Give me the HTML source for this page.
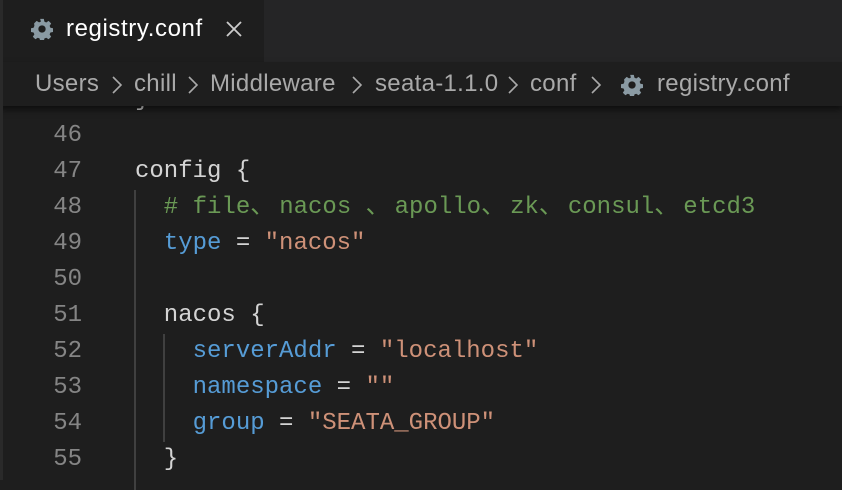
<!DOCTYPE html>
<html><head><meta charset="utf-8"><style>
*{margin:0;padding:0;box-sizing:border-box}
body{width:842px;height:480px;background:#1e1e1e;overflow:hidden;position:relative;font-family:"Liberation Sans",sans-serif}
.lb{position:absolute;left:0;top:0;width:3px;height:480px;background:#2a2a2a;z-index:5}
.tabs{position:absolute;left:0;top:0;width:842px;height:62px;background:#252526}
.tab{position:absolute;left:3px;top:0;width:261px;height:62px;background:#1e1e1e;color:#fff;font-size:24px;letter-spacing:.6px}
.tab .t{position:absolute;left:63px;top:15px}
.bc{position:absolute;left:0;top:62px;width:842px;height:44px;background:#1e1e1e;color:#a9a9a9;font-size:24px;letter-spacing:.3px;z-index:3;box-shadow:0 4px 6px rgba(0,0,0,.5)}
.bc span{position:absolute;top:8px;white-space:pre}
.bc svg.ch{position:absolute;top:13px}
.code{position:absolute;left:0;top:82px;font-family:"Liberation Mono",monospace;font-size:24px;line-height:36px}
.ln{position:absolute;left:0;width:82px;text-align:right;color:#858585}
.c{position:absolute;left:135px;white-space:pre;color:#d4d4d4;height:36px}
.cm{color:#6a9955}.k{color:#569cd6}.s{color:#ce9178}
.j{display:inline-block;width:29px;line-height:24px;vertical-align:baseline;font-family:"Noto Sans CJK SC",sans-serif}
.g{position:absolute;width:2px;background:#404040}
</style></head><body>
<div class="lb"></div>
<div class="tabs"><div class="tab">
<svg style="position:absolute;left:28px;top:18px" width="22" height="22" viewBox="0 0 24 24"><path fill="#8a9aa3" d="M10 1h4l.6 3 2 .9 2.6-1.7 2.8 2.8-1.7 2.6.9 2 3 .6v4l-3 .6-.9 2 1.7 2.6-2.8 2.8-2.6-1.7-2 .9-.6 3h-4l-.6-3-2-.9-2.6 1.7-2.8-2.8 1.7-2.6-.9-2-3-.6v-4l3-.6.9-2L3.4 5.9l2.8-2.8 2.6 1.7 2-.9zM12 8a4 4 0 100 8 4 4 0 000-8z"/></svg>
<span class="t">registry.conf</span>
<svg style="position:absolute;left:222px;top:20px" width="18" height="18" viewBox="0 0 18 18"><path d="M2 2L16 16M16 2L2 16" stroke="#ccc" stroke-width="1.8"/></svg>
</div></div>
<div class="bc">
<span style="left:35px">Users</span>
<svg class="ch" style="left:110px" width="14" height="20" viewBox="0 0 14 20"><path d="M3 2l8 8-8 8" fill="none" stroke="#a9a9a9" stroke-width="1.6"/></svg>
<span style="left:134px">chill</span>
<svg class="ch" style="left:186px" width="14" height="20" viewBox="0 0 14 20"><path d="M3 2l8 8-8 8" fill="none" stroke="#a9a9a9" stroke-width="1.6"/></svg>
<span style="left:210px">Middleware</span>
<svg class="ch" style="left:350px" width="14" height="20" viewBox="0 0 14 20"><path d="M3 2l8 8-8 8" fill="none" stroke="#a9a9a9" stroke-width="1.6"/></svg>
<span style="left:375px">seata-1.1.0</span>
<svg class="ch" style="left:506px" width="14" height="20" viewBox="0 0 14 20"><path d="M3 2l8 8-8 8" fill="none" stroke="#a9a9a9" stroke-width="1.6"/></svg>
<span style="left:530px">conf</span>
<svg class="ch" style="left:589px" width="14" height="20" viewBox="0 0 14 20"><path d="M3 2l8 8-8 8" fill="none" stroke="#a9a9a9" stroke-width="1.6"/></svg>
<svg style="position:absolute;left:621px;top:12px" width="22" height="22" viewBox="0 0 24 24"><path fill="#8a9aa3" d="M10 1h4l.6 3 2 .9 2.6-1.7 2.8 2.8-1.7 2.6.9 2 3 .6v4l-3 .6-.9 2 1.7 2.6-2.8 2.8-2.6-1.7-2 .9-.6 3h-4l-.6-3-2-.9-2.6 1.7-2.8-2.8 1.7-2.6-.9-2-3-.6v-4l3-.6.9-2L3.4 5.9l2.8-2.8 2.6 1.7 2-.9zM12 8a4 4 0 100 8 4 4 0 000-8z"/></svg>
<span style="left:657px">registry.conf</span>
</div>
<div class="code">
<div class="ln" style="top:0">45</div><div class="c" style="top:0">}</div>
<div class="ln" style="top:36px">46</div>
<div class="ln" style="top:72px">47</div><div class="c" style="top:72px">config {</div>
<div class="ln" style="top:108px">48</div><div class="c cm" style="top:108px">  # file<span class="j">、</span>nacos <span class="j">、</span>apollo<span class="j">、</span>zk<span class="j">、</span>consul<span class="j">、</span>etcd3</div>
<div class="ln" style="top:144px">49</div><div class="c" style="top:144px">  <span class="k">type</span> = <span class="s">"nacos"</span></div>
<div class="ln" style="top:180px">50</div>
<div class="ln" style="top:216px">51</div><div class="c" style="top:216px">  nacos {</div>
<div class="ln" style="top:252px">52</div><div class="c" style="top:252px">    <span class="k">serverAddr</span> = <span class="s">"localhost"</span></div>
<div class="ln" style="top:288px">53</div><div class="c" style="top:288px">    <span class="k">namespace</span> = <span class="s">""</span></div>
<div class="ln" style="top:324px">54</div><div class="c" style="top:324px">    <span class="k">group</span> = <span class="s">"SEATA_GROUP"</span></div>
<div class="ln" style="top:360px">55</div><div class="c" style="top:360px">  }</div>
<div class="g" style="left:134px;top:108px;height:300px"></div>
<div class="g" style="left:163px;top:252px;height:108px"></div>
</div>
</body></html>
